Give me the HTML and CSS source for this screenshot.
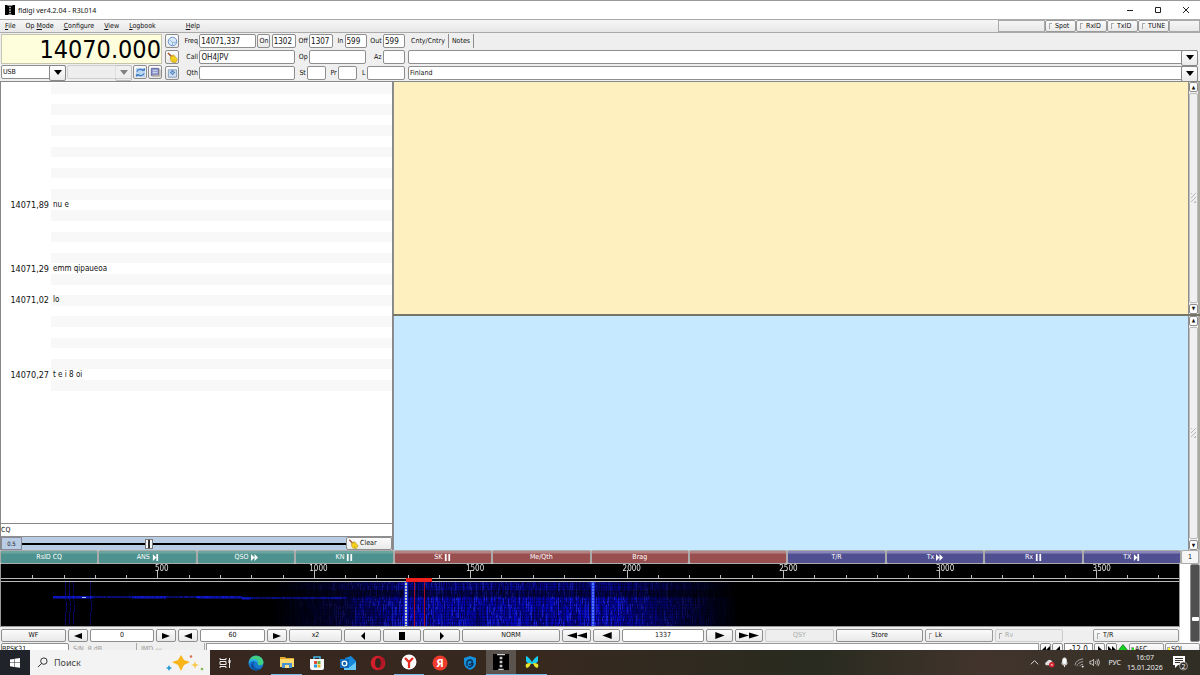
FILE: index.html
```html
<!DOCTYPE html>
<html lang="en">
<head>
    <meta charset="UTF-8">
    <meta name="viewport" content="width=device-width, initial-scale=1.0">
    <title>fldigi ver4.2.04 - R3L014</title>
    <link rel="stylesheet" href="styles.css">
</head>
<body>

<svg class="defs" aria-hidden="true">
    <symbol id="left" viewBox="0 0 8 6"><path d="M0 3 8 0v6z"/></symbol>
    <symbol id="right" viewBox="0 0 8 6"><path d="M8 3 0 0v6z"/></symbol>
    <symbol id="left2" viewBox="0 0 20 6"><path d="M0 3 10 0v6zM10 3 20 0v6z"/></symbol>
    <symbol id="right2" viewBox="0 0 20 6"><path d="M20 3 10 0v6zM10 3 0 0v6z"/></symbol>
    <symbol id="small-left" viewBox="0 0 8 8"><path d="M2 4 6 0v8z"/></symbol>
    <symbol id="small-right" viewBox="0 0 8 8"><path d="M6 4 2 0v8z"/></symbol>
    <symbol id="stop" viewBox="0 0 8 8"><path d="M1 0h6v8H1z"/></symbol>
    <symbol id="next" viewBox="0 0 8 8"><path d="M1 0l4 4-4 4zM5 0h2v8H5z"/></symbol>
    <symbol id="fast" viewBox="0 0 8 8"><path d="M0 0l4 4-4 4zM4 0l4 4-4 4z"/></symbol>
    <symbol id="back" viewBox="0 0 8 8"><path d="M4 0v8L0 4zM8 0v8L4 4z"/></symbol>
    <symbol id="pause" viewBox="0 0 8 8"><path d="M1 0h2v8H1zM5 0h2v8H5z"/></symbol>
    <symbol id="fldigi" viewBox="0 0 12 12"><path fill="#000" d="M0 0h12v12H0z"/><path fill="#ccc" d="M3 0h6v1H3zM5 2h2v2H5zM5 5h2v2H5zM5 8h2v2H5zM4 11h4v1H4z"/></symbol>
    <symbol id="broom" viewBox="0 0 12 12"><path stroke="#a0522d" stroke-width="1.6" d="M1 1l4 4"/><path fill="#f8d21c" stroke="#a8851a" stroke-width=".6" d="M3.500 5.500L7 3l4.500 5-2 3.500-4-.5-1.500-2z"/><path stroke="#b48e1c" stroke-width=".5" d="M4 6l4-2M7 8l1 3"/></symbol>
    <symbol id="globe" viewBox="0 0 12 12"><circle cx="6" cy="6" r="4.6" fill="#dcebfa" stroke="#5b8fca"/><path fill="none" stroke="#86aedb" d="M3 4l3 3h4M6 7v3"/></symbol>
    <symbol id="sync" viewBox="0 0 12 12"><path fill="#bcd6f2" d="M1 1h10v10H1z"/><path fill="none" stroke="#3d79c2" stroke-width="1.4" d="M2 5c1-3 6-3 7-1M10 7c-1 3-6 3-7 1"/><path fill="#3d79c2" d="M7 4h4V1zM5 8H1v3z"/></symbol>
    <symbol id="book" viewBox="0 0 12 12"><path fill="#8f9ad0" stroke="#5c669c" d="M1.500 1.500h8v8h-8z"/><path fill="#fff" stroke="#8c7a68" stroke-width=".6" d="M3 10h8V3h-1v6H3z"/><path stroke="#d4d9ef" d="M3 4h5M3 6h5"/></symbol>
    <symbol id="save" viewBox="0 0 12 12"><path fill="#cfe0f3" stroke="#8097b3" d="M1.500 2h9v8h-9z"/><path fill="#4f83bd" d="M6 2l3 3-3 3-3-3z"/><path fill="#a9c6e6" d="M5 4h2v2H5z"/></symbol>
</svg>

<header class="titlebar">
    <svg class="logo"><use href="#fldigi"/></svg>
    <span class="caption">fldigi ver4.2.04 - R3L014</span>
    <button class="win" aria-label="Minimize"><svg viewBox="0 0 8 8"><path d="M1 4.500h6"/></svg></button>
    <button class="win" aria-label="Maximize"><svg viewBox="0 0 8 8"><path d="M1.500 1.500h5v5h-5z"/></svg></button>
    <button class="win" aria-label="Close"><svg viewBox="0 0 8 8"><path d="M1 1l6 6M7 1l-6 6"/></svg></button>
</header>

<nav class="menubar">
    <button><u>F</u>ile</button>
    <button>Op <u>M</u>ode</button>
    <button><u>C</u>onfigure</button>
    <button><u>V</u>iew</button>
    <button><u>L</u>ogbook</button>
    <button class="help"><u>H</u>elp</button>
    <span class="blank wide"></span>
    <label class="light"><input type="checkbox">Spot</label>
    <label class="light"><input type="checkbox">RxID</label>
    <label class="light"><input type="checkbox">TxID</label>
    <label class="light"><input type="checkbox">TUNE</label>
    <span class="blank"></span>
</nav>

<section class="rig">
    <div class="tuner">
        <output class="dial">14070.000</output>
        <div class="modes">
            <span class="combo"><select aria-label="Mode"><option>USB</option></select></span>
            <span class="combo off"><select aria-label="Bandwidth" disabled><option></option></select></span>
            <button class="tool" aria-label="Sync"><svg><use href="#sync"/></svg></button>
            <button class="tool" aria-label="Logbook"><svg><use href="#book"/></svg></button>
        </div>
    </div>
    <div class="tools">
        <button class="tool" aria-label="Lookup"><svg><use href="#globe"/></svg></button>
        <button class="tool" aria-label="Clear fields"><svg><use href="#broom"/></svg></button>
        <button class="tool" aria-label="Save contact"><svg><use href="#save"/></svg></button>
    </div>
    <div class="log">
        <div class="row">
            <label class="first" for="freq">Freq</label><input class="w-freq" id="freq" value="14071,337">
            <button class="on">On</button><input class="w-time" aria-label="Time on" value="1302">
            <label class="mid" for="toff">Off</label><input class="w-time" id="toff" value="1307">
            <label class="in" for="rin">In</label><input class="w-rst" id="rin" value="599">
            <label class="out" for="rout">Out</label><input class="w-rst" id="rout" value="599">
        </div>
        <div class="row">
            <label class="first" for="call">Call</label><input class="w-call" id="call" value="OH4JPV">
            <label class="mid" for="op">Op</label><input class="w-op" id="op">
            <label class="out" for="az">Az</label><input class="w-rst" id="az">
        </div>
        <div class="row">
            <label class="first" for="qth">Qth</label><input class="w-call" id="qth">
            <label class="st" for="st">St</label><input class="w-st" id="st">
            <label class="st" for="pr">Pr</label><input class="w-st" id="pr">
            <label class="loc" for="loc">L</label><input class="w-loc" id="loc">
        </div>
    </div>
    <div class="country">
        <div class="tabs"><button class="active">Cnty/Cntry</button><button>Notes</button></div>
        <span class="combo"><select aria-label="County"><option></option></select></span>
        <span class="combo"><select aria-label="Country"><option>Finland</option></select></span>
    </div>
</section>

<main>
    <section class="browser">
        <div class="signals"><table><tbody id="signals"></tbody></table></div>
        <input class="seek" aria-label="Seek" value="CQ">
        <div class="squelch">
            <output>0.5</output>
            <input type="range" aria-label="Squelch" min="0" max="100" value="39">
            <button><svg><use href="#broom"/></svg>Clear</button>
        </div>
    </section>
    <section class="texts">
        <div class="pane rx">
            <textarea aria-label="Received text"></textarea>
            <div class="scroll"><button aria-label="Up">&#9650;</button><i></i><button aria-label="Down">&#9660;</button></div>
        </div>
        <div class="pane tx">
            <textarea aria-label="Transmit text"></textarea>
            <div class="scroll"><button aria-label="Up">&#9650;</button><i></i><button aria-label="Down">&#9660;</button></div>
        </div>
    </section>
</main>

<section class="macros">
    <button class="green">RsID CQ</button>
    <button class="green">ANS <svg><use href="#next"/></svg></button>
    <button class="green">QSO <svg><use href="#fast"/></svg></button>
    <button class="green">KN <svg><use href="#pause"/></svg></button>
    <button class="red">SK <svg><use href="#pause"/></svg></button>
    <button class="red">Me/Qth</button>
    <button class="red">Brag</button>
    <button class="red" aria-label="Empty macro"></button>
    <button class="blue">T/R</button>
    <button class="blue">Tx <svg><use href="#fast"/></svg></button>
    <button class="blue">Rx <svg><use href="#pause"/></svg></button>
    <button class="blue">TX <svg><use href="#next"/></svg></button>
    <button class="page">1</button>
</section>

<section class="waterfall">
    <div class="left">
        <div class="display">
            <canvas id="fall" width="1178" height="62"></canvas>
            <div class="scale"><span>500</span><span>1000</span><span>1500</span><span>2000</span><span>2500</span><span>3000</span><span>3500</span></div>
        </div>
        <div class="controls">
            <button>WF</button>
            <button aria-label="Lower level"><svg><use href="#left"/></svg></button>
            <input aria-label="Level" value="0">
            <button aria-label="Raise level"><svg><use href="#right"/></svg></button>
            <button aria-label="Lower range"><svg><use href="#left"/></svg></button>
            <input aria-label="Range" value="60">
            <button aria-label="Raise range"><svg><use href="#right"/></svg></button>
            <button>x2</button>
            <button aria-label="Scroll left"><svg><use href="#small-left"/></svg></button>
            <button aria-label="Center"><svg><use href="#stop"/></svg></button>
            <button aria-label="Scroll right"><svg><use href="#small-right"/></svg></button>
            <button>NORM</button>
            <button aria-label="Fast down"><svg class="double"><use href="#left2"/></svg></button>
            <button aria-label="Down"><svg class="big"><use href="#left"/></svg></button>
            <input aria-label="Carrier" value="1337">
            <button aria-label="Up"><svg class="big"><use href="#right"/></svg></button>
            <button aria-label="Fast up"><svg class="double"><use href="#right2"/></svg></button>
            <button disabled>QSY</button>
            <button>Store</button>
            <label class="light"><input type="checkbox">Lk</label>
            <label class="light dim"><input type="checkbox" disabled>Rv</label>
            <span></span>
            <label class="light"><input type="checkbox">T/R</label>
        </div>
    </div>
    <div class="power"><input type="range" aria-label="Transmit level" min="0" max="100" value="28"></div>
</section>

<footer class="status">
    <button class="mode">BPSK31</button>
    <span class="info">S/N &nbsp;8 dB</span>
    <span class="info">IMD ---</span>
    <span class="message"></span>
    <button aria-label="Much less"><svg><use href="#back"/></svg></button>
    <button aria-label="Less"><svg><use href="#small-left"/></svg></button>
    <output>-12.0</output>
    <button aria-label="More"><svg><use href="#small-right"/></svg></button>
    <button aria-label="Much more"><svg><use href="#fast"/></svg></button>
    <svg class="diamond" viewBox="0 0 8 8"><path fill="#12d21e" stroke="#075c0c" stroke-width=".5" d="M4 0l4 5-4 3-4-3z"/></svg>
    <label class="light afc"><input type="checkbox" checked>AFC</label>
    <label class="light sql"><input type="checkbox" checked>SQL</label>
</footer>

<div class="taskbar">
    <button class="start" aria-label="Start"><svg viewBox="0 0 12 12"><path fill="#fff" d="M1 2.500l4-.6v3.700H1zM5.500 1.800L11 1v4.600H5.500zM1 6.100h4v3.800l-4-.6zM5.500 6.100H11v4.700L5.500 10z"/></svg></button>
    <label class="search">
        <svg class="lens" viewBox="0 0 12 12"><circle cx="7.500" cy="4.500" r="3.500"/><path d="M5 7l-4 4"/></svg>
        <input type="text" placeholder="Поиск">
        <svg class="sparkle" viewBox="0 0 38 18"><path fill="#f9b61a" d="M15 1l3 5 6 2-6 3-3 6-3-6-6-3 6-2z"/><path fill="#f7c84a" d="M29 7l1 3 3 1-3 1-1 3-1-3-3-1 3-1z"/><path fill="#249bd3" d="M3 11l1 2 2 1-2 1-1 2-1-2-2-1 2-1z"/><circle cx="25" cy="2.500" r="1.300" fill="#d9744b"/><circle cx="36" cy="15" r="1.300" fill="#83b84c"/></svg>
    </label>
    <div class="apps">
        <button aria-label="Task view"><svg viewBox="0 0 16 16"><path fill="none" stroke="#eee" d="M3 3v1.500h6V3M3 6.500h6v3H3zM3 13v-1.500h6V13M12.500 3v10"/><path fill="#eee" d="M11.500 5h2v3h-2z"/></svg></button>
        <button aria-label="Edge"><svg viewBox="0 0 16 16"><circle cx="8" cy="8" r="7.500" fill="#1679cf"/><path fill="#43cf82" d="M1 6C3-1 14-1 15.500 7c0 4-5 4-6 2 2-4-4-7-8.500-3z"/><path fill="#28b7e7" d="M1 6c5-4 10-1 8.500 2C6 4 2 6 .6 9z"/><path fill="#0c519f" d="M6 7c-2 4 2 8 7 6-4 5-11 1-10-3 .5-2 2-3 3-3z"/></svg></button>
        <button class="open" aria-label="Explorer"><svg viewBox="0 0 16 16"><path fill="#e5a82e" d="M1 3h5l1 1h8v9H1z"/><path fill="#ffdb6e" d="M1 5h14v8H1z"/><path fill="#4c93d2" d="M3 9h10v5H3z"/><path fill="#ffe48d" d="M6 11h4v3H6z"/></svg></button>
        <button aria-label="Store"><svg viewBox="0 0 16 16"><path fill="none" stroke="#48b5e8" stroke-width="1.500" d="M5 5V2h6v3"/><path fill="#f5f7f8" d="M1 4h14v9q0 2-2 2H3q-2 0-2-2z"/><path fill="#e74c35" d="M5 6h3v3H5z"/><path fill="#70b13c" d="M8.500 6h3v3h-3z"/><path fill="#259de0" d="M5 9.500h3v3H5z"/><path fill="#f0b320" d="M8.500 9.500h3v3h-3z"/></svg></button>
        <button aria-label="Outlook"><svg viewBox="0 0 16 16"><path fill="#1687d9" d="M5 3l6-2 5 5v9H4z"/><path fill="#65c8f6" d="M4 9l6 3 6-5v8H4z"/><path fill="#1168b8" d="M0 4h9v9H0z"/><circle cx="4.500" cy="8.500" r="2.300" fill="none" stroke="#fff" stroke-width="1.300"/></svg></button>
        <button aria-label="Opera"><svg viewBox="0 0 16 16"><circle cx="8" cy="8" r="7.300" fill="#d31e2b"/><ellipse cx="8" cy="8" rx="3" ry="5" fill="#35251f"/><path fill="#8f1220" d="M9 1q9 2 4 11-2 3-5 2 5-4 1-13z" opacity=".5"/></svg></button>
        <button class="open" aria-label="Yandex Browser"><svg viewBox="0 0 16 16"><circle cx="8" cy="8" r="7.500" fill="#fff"/><path fill="none" stroke="#e62b23" stroke-width="2.300" d="M4 4l4 4 4-4M8 8v6"/></svg></button>
        <button aria-label="Yandex"><svg viewBox="0 0 16 16"><circle cx="8" cy="8" r="7.500" fill="#ef3b2d"/><text x="8" y="12" text-anchor="middle" fill="#fff">Я</text></svg></button>
        <button aria-label="Security"><svg viewBox="0 0 16 16"><path fill="#1590dc" d="M8 1l6 2v5q0 5-6 7-6-2-6-7V3z"/><path fill="none" stroke="#0b2d50" stroke-width="1.500" d="M5 11q-1-6 3-6 3 0 2 3-1 2-3 1M6 12q5 0 5-4"/></svg></button>
        <button class="open active" aria-label="fldigi"><svg><use href="#fldigi"/></svg></button>
        <button class="open" aria-label="Butterfly"><svg viewBox="0 0 16 16"><path fill="#19cbed" d="M2 2q3 1 6 6v2q-5 0-6-3zM14 2q-3 1-6 6v2q5 0 6-3z"/><path fill="#e9e52d" d="M7 9q-3 0-5 1-1 3 1 4 3-1 4-5zM9 9q3 0 5 1 1 3-1 4-3-1-4-5z"/></svg></button>
    </div>
    <div class="tray">
        <svg viewBox="0 0 12 12"><path d="M2 8l4-4 4 4"/></svg>
        <svg viewBox="0 0 12 12"><path fill="#ddd" stroke="none" d="M2 9Q0 7 3 5q3-4 6 0l1 4z"/><circle cx="8.500" cy="8.500" r="3" fill="#d5202b" stroke="none"/><path stroke-width=".8" d="M7.500 7.500l2 2m0-2l-2 2"/></svg>
        <svg viewBox="0 0 12 12"><rect x="4" y="1" width="4" height="7" rx="2" fill="#fff"/><path d="M3 6q0 3 3 3t3-3M6 9v2"/></svg>
        <svg viewBox="0 0 12 12"><path stroke="#aaa" d="M1 9Q2 3 10 2M3 10q1-4 7-5M6 10q1-2 4-2"/><path fill="#fff" d="M9 10h1v1H9z"/></svg>
        <svg viewBox="0 0 12 12"><path stroke-width=".8" d="M1 4.500h2l2-2v7l-2-2H1zM7 4.500q1 1.500 0 3M8.500 3q2 3 0 6M10 2q3 4 0 8"/></svg>
        <span class="lang">РУС</span>
        <time>16:07<br>15.01.2026</time>
        <svg class="note" viewBox="0 0 16 16"><path fill="#fff" stroke="none" d="M1 1h12v9H6l-3 3v-3H1z"/><path stroke="#39302b" d="M3 3.500h8M3 5.500h8M3 7.500h5"/><circle cx="11.500" cy="11" r="4" fill="#39302b" stroke="#bbb" stroke-width=".7"/><text x="11.500" y="13.500" text-anchor="middle">2</text></svg>
    </div>
</div>

<script src="script.js"></script>
</body>
</html>
```
FILE: styles.css
```css
* {
    margin: 0;
    padding: 0;
    box-sizing: border-box;
}

body {
    height: 100vh;
    display: flex;
    flex-direction: column;
    overflow: hidden;
    background: #efefef;
    color: #111;
    font: 7px/9px "DejaVu Sans Condensed", "DejaVu Sans", sans-serif;
}

button, input, select, textarea {
    font: inherit;
    color: inherit;
    min-width: 0;
    border: 1px solid #8e8e8e;
    border-radius: 2px;
    outline: none;
}

button {
    display: flex;
    align-items: center;
    justify-content: center;
    background: linear-gradient(#fbfbfb, #e9e9e9);
    white-space: nowrap;
}

input, select {
    background: #fff;
    padding: 0 1px;
    font-size: 8px;
}

svg {
    flex: none;
    width: 8px;
    height: 8px;
}

.defs {
    display: none;
}

/* title and menu */
.titlebar {
    flex: none;
    display: flex;
    align-items: center;
    height: 19px;
    padding-left: 5px;
    background: #fff;
    border-top: 1px solid #999;
    font-family: "Noto Sans", sans-serif;
}

.logo {
    width: 10px;
    height: 10px;
    margin-right: 3px;
}

.caption {
    flex: 1;
}

.win {
    width: 28px;
    height: 18px;
    border: none;
    background: none;
}

.win svg {
    fill: none;
    stroke: #222;
    stroke-width: 1;
}

.menubar {
    flex: none;
    display: flex;
    height: 14px;
    border-top: 1px solid #aaa;
    border-bottom: 1px solid #aaa;
    background: linear-gradient(#f6f6f6, #e7e7e7);
}

.menubar button {
    display: block;
    border: none;
    background: none;
    padding: 0 5px;
}

.menubar .help {
    margin: 0 auto 0 20px;
}

.light {
    display: flex;
    align-items: center;
    gap: 3px;
    padding-left: 3px;
    border: 1px solid #999;
    border-radius: 2px;
    background: linear-gradient(#fbfbfb, #e9e9e9);
}

.light input {
    appearance: none;
    width: 3px;
    height: 6px;
    border: none;
    border-left: 1px solid #aaa;
    border-top: 1px solid #aaa;
    border-radius: 0;
    background: none;
}

.menubar .light {
    width: 31px;
}

.blank {
    width: 31px;
    border: 1px solid #aaa;
}

.blank.wide {
    width: 47px;
}

/* rig and log fields */
.rig {
    flex: none;
    display: flex;
    gap: 3px;
    height: 49px;
    padding: 1px 2px 1px 1px;
    border-bottom: 1px solid #888;
}

.tuner {
    width: 161px;
    display: flex;
    flex-direction: column;
    gap: 1px;
}

.dial {
    height: 30px;
    background: #fffedc;
    border: 1px solid #c6c5b0;
    text-align: right;
    font-size: 25px;
    line-height: 29px;
    color: #000;
}

.modes {
    display: flex;
    gap: 1px;
}

.combo {
    display: flex;
    position: relative;
    width: 65px;
    height: 14px;
}

.combo select {
    flex: 1;
    appearance: none;
}

.modes select {
    font-size: 7px;
}

.combo::after {
    content: "";
    position: absolute;
    right: 4px;
    top: 5px;
    border: 4px solid transparent;
    border-top: 5px solid #000;
    border-bottom: none;
    pointer-events: none;
}

.combo::before {
    content: "";
    position: absolute;
    right: 0;
    width: 15px;
    height: 100%;
    border: 1px solid #888;
    border-radius: 2px;
    background: linear-gradient(#fff, #eaeaea);
    pointer-events: none;
}

.combo.off {
    opacity: .45;
}

.off select {
    background: #eee;
}

.tool {
    flex: 1;
    height: 14px;
}

.tool svg {
    width: 11px;
    height: 11px;
}

.tools {
    width: 14px;
    display: flex;
    flex-direction: column;
    gap: 2px;
}

.tools .tool {
    flex: none;
}

.log {
    width: 223px;
    display: flex;
    flex-direction: column;
    gap: 2px;
}

.row {
    display: flex;
    align-items: center;
    justify-content: space-between;
    height: 14px;
}

.row input, .on {
    height: 14px;
}

.row label {
    text-align: right;
}

.first { width: 16px; }
.mid { width: 11px; }
.in { width: 9px; }
.out { width: 14px; }
.st { width: 9px; }
.loc { width: 7px; }
.on { width: 13px; }
.w-freq { width: 57px; }
.w-time { width: 24px; }
.w-rst { width: 22px; }
.w-call { width: 96px; }
.w-op { width: 57px; }
.w-st { width: 19px; }
.w-loc { width: 38px; }

.country {
    flex: 1;
    display: flex;
    flex-direction: column;
    gap: 2px;
}

.country .combo {
    width: 100%;
}

.country select {
    font-size: 7px;
}

.tabs {
    display: flex;
    height: 14px;
}

.tabs button {
    padding: 0 3px;
    background: none;
    border-width: 0 1px 0 0;
    border-radius: 0;
}

/* signal browser and text panes */
main {
    flex: 1;
    min-height: 0;
    display: flex;
}

.browser {
    width: 33%;
    max-width: 393px;
    display: flex;
    flex-direction: column;
    border-left: 1px solid #888;
    border-right: 1px solid #888;
}

.signals {
    flex: 1;
    min-height: 0;
    padding-top: 1px;
    overflow: hidden;
    background: #fff;
    border-bottom: 1px solid #888;
}

.signals table {
    width: 100%;
    height: 308px;
    border-collapse: collapse;
    table-layout: fixed;
    font-size: 8px;
    line-height: 10px;
    white-space: pre;
}

.signals tr {
    height: 10px;
}

.signals th {
    width: 50px;
    padding-right: 2px;
    font-weight: normal;
    font-size: 9px;
    text-align: right;
}

.signals td {
    padding-left: 2px;
}

.signals tr:nth-child(odd) td {
    background: #f8f8f8;
}

.seek {
    height: 13px;
    padding: 0;
    border-width: 0 0 1px;
    border-radius: 0;
    font-size: 7px;
}

.squelch {
    display: flex;
    height: 13px;
    background: #b8cce4;
}

.squelch output {
    width: 21px;
    border: 1px solid #889;
    text-align: center;
    line-height: 12px;
    font-size: 6px;
}

.squelch input {
    flex: 1;
    appearance: none;
    padding: 0;
    border: none;
    background: linear-gradient(#000, #000) center / 100% 2px no-repeat #b8cce4;
}

.squelch input::-webkit-slider-thumb {
    appearance: none;
    width: 8px;
    height: 10px;
    border: 1px solid #777;
    background: linear-gradient(#333, #333) center / 2px 8px no-repeat #f4f4f4;
}

.squelch button {
    width: 46px;
    justify-content: flex-start;
    gap: 1px;
    padding-left: 1px;
}

.squelch svg {
    width: 11px;
    height: 10px;
}

.texts {
    flex: 1;
    display: flex;
    flex-direction: column;
}

.pane {
    flex: 1;
    display: flex;
    padding-right: 2px;
    background: #aaa9a0;
}

.pane textarea {
    flex: 1;
    resize: none;
    border-width: 0 1px 0 1px;
    border-radius: 0;
}

.rx {
    flex-grow: 99;
    border-bottom: 2px solid #777566;
}

.tx {
    flex-grow: 100;
}

.rx textarea {
    background: #fff0bf;
}

.tx textarea {
    background: #c6e9ff;
}

.scroll {
    width: 9px;
    display: flex;
    flex-direction: column;
    background: #f0f0f0;
}

.scroll button {
    height: 10px;
    font-size: 5px;
    background: #fff;
}

.scroll i {
    flex: 1;
    margin: 1px 0;
    border: 1px solid #bbb;
    border-radius: 2px;
    background: repeating-linear-gradient(135deg, #bbb 0 1px, #eee 1px 3px) center / 5px 10px no-repeat;
}

/* macro keys */
.macros {
    flex: none;
    display: flex;
    height: 14px;
    padding-right: 1px;
    background: #c8c8c8;
}

.macros button {
    flex: 1;
    gap: 2px;
    color: #fff;
    border-color: #aaa;
}

.macros svg {
    width: 7px;
    height: 7px;
    fill: #fff;
}

.macros .green { background: linear-gradient(#6ba59f 0 2px, #4d928e 3px); }
.macros .red { background: linear-gradient(#b58282 0 2px, #994f50 3px); }
.macros .blue { background: linear-gradient(#8786b7 0 2px, #504f92 3px); }

.macros .page {
    flex: none;
    width: 18px;
    color: #111;
    background: #f5f5f5;
}

/* waterfall */
.waterfall {
    flex: none;
    display: flex;
}

.left {
    flex: 1;
    min-width: 0;
}

.display {
    position: relative;
    border: 1px solid #999;
    border-top: none;
}

.display canvas {
    display: block;
    width: 100%;
    height: 62px;
}

.scale {
    position: absolute;
    inset: 0;
    display: flex;
    padding-left: 7%;
    color: #e6e6e6;
    font-size: 8px;
    line-height: 10px;
}

.scale span {
    flex: none;
    width: 14.3%;
    text-align: center;
}

.controls {
    display: grid;
    grid-template-columns: 65fr 20fr 64fr 20fr 20fr 65fr 20fr 53fr 37fr 38fr 37fr 98fr 29fr 27fr 82fr 27fr 28fr 69fr 87fr 68fr 68fr 26fr 86fr;
    gap: 2px;
    height: 16px;
    padding: 2px 1px 1px;
}

.controls > input {
    width: 100%;
    text-align: center;
    font-size: 7px;
}

.controls .big {
    width: 10px;
    height: 7px;
}

.controls .double {
    width: 20px;
    height: 7px;
}

.controls button:disabled, .dim {
    color: #aaa;
    border-color: #ccc;
    background: #eee;
}

.power {
    width: 20px;
    display: flex;
    justify-content: flex-end;
    background: #fff;
}

.power input {
    writing-mode: vertical-lr;
    direction: rtl;
    appearance: none;
    width: 10px;
    height: 78px;
    background: #505050;
}

.power input::-webkit-slider-thumb {
    appearance: none;
    width: 7px;
    height: 4px;
    border-radius: 1px;
    background: #fff;
}

/* status line, cut off by the taskbar */
.status {
    flex: none;
    display: flex;
    height: 7px;
    overflow: hidden;
    gap: 1px;
    padding-left: 1px;
}

.status > * {
    flex: none;
    height: 13px;
}

.status .mode {
    width: 68px;
    justify-content: flex-start;
    background: #fff;
}

.status .info {
    width: 67px;
    padding: 2px 3px;
    border-right: 1px solid #aaa;
    color: #999;
}

.status .message {
    flex: 1;
    border: 1px solid #999;
    background: #fff;
}

.status button {
    width: 11px;
}

.status output {
    width: 29px;
    border: 1px solid #888;
    background: #fff;
    text-align: center;
    font-size: 8px;
    line-height: 12px;
}

.diamond {
    width: 10px;
}

.status .light {
    width: 35px;
    gap: 1px;
    padding-left: 1px;
}

.status .afc input { background: #1ee11e; }
.status .sql input { background: #f5ed19; }

/* taskbar */
.taskbar {
    flex: none;
    display: flex;
    height: 25px;
    background: linear-gradient(90deg, #35251f, #38291f 45%, #292b20 68%, #42342c 82%, #302e24);
    color: #eee;
    font-family: "Noto Sans", sans-serif;
}

.taskbar button {
    border: none;
    border-radius: 0;
    background: none;
}

.taskbar .start {
    width: 30px;
    background: #20242a;
}

.start svg {
    width: 12px;
    height: 12px;
}

.search {
    width: 180px;
    display: flex;
    align-items: center;
    padding: 0 6px 0 7px;
    background: #f3f3f3;
}

.search input {
    flex: 1;
    padding-left: 6px;
    border: none;
    background: none;
    color: #333;
    font-size: 9px;
}

.search input::placeholder {
    color: #444;
}

.lens {
    width: 11px;
    height: 11px;
    fill: none;
    stroke: #222;
}

.sparkle {
    width: 38px;
    height: 18px;
}

.apps {
    width: 337px;
    display: grid;
    grid-template-columns: repeat(11, 1fr);
}

.apps svg {
    width: 16px;
    height: 16px;
}

.apps text {
    font-size: 11px;
    font-weight: bold;
}

.taskbar .open {
    border-bottom: 1px solid #76b9ed;
}

.taskbar .active {
    background: #5b534e;
}

.tray {
    display: flex;
    align-items: center;
    gap: 4px;
    margin-left: auto;
    padding-right: 12px;
}

.tray svg {
    width: 11px;
    height: 11px;
    fill: none;
    stroke: #eee;
}

.lang {
    margin-left: 4px;
}

.tray time {
    width: 40px;
    line-height: 10px;
    text-align: center;
}

.tray .note {
    width: 16px;
    height: 16px;
    margin-left: 3px;
}

.note text {
    fill: #fff;
    stroke: none;
    font-size: 7px;
}
```
FILE: script.js
```javascript
const heard = {
    11: ["14071,89", "nu e"],
    17: ["14071,29", "emm qipaueoa"],
    20: ["14071,02", "lo"],
    27: ["14070,27", "t e i 8 oi"]
};

const body = document.getElementById("signals");
for (let i = 0; i < 29; i++) {
    const row = body.insertRow();
    const [freq, text] = heard[i] || ["", ""];
    const head = document.createElement("th");
    head.textContent = freq;
    row.append(head);
    row.insertCell().textContent = text;
}

const canvas = document.getElementById("fall");
const ctx = canvas.getContext("2d");
const hz = 0.3128;

// fixed seed, so the noise does not change on reload
let seed = 7;
function rnd() {
    seed = (seed * 16807) % 2147483647;
    return seed / 2147483647;
}

ctx.fillStyle = "#000";
ctx.fillRect(0, 0, canvas.width, canvas.height);

// frequency scale
ctx.fillStyle = "#bbb";
ctx.fillRect(0, 14, canvas.width, 1);
ctx.fillRect(0, 17, canvas.width, 1);
for (let f = 100; f < 3766; f += 100) {
    const tall = f % 500 === 0;
    ctx.fillRect(Math.round(f * hz), tall ? 6 : 11, 1, tall ? 8 : 3);
}

// band noise
function level(x) {
    if (x < 270) return 0;
    if (x < 400) return (x - 270) / 140;
    if (x < 620) return 1;
    return Math.max(0, 0.9 - (x - 620) / 130);
}

for (let x = 0; x < 780; x++) {
    let v = rnd();
    for (let y = 18; y < 62; y++) {
        if (rnd() < 0.2) v = rnd();
        let a = level(x) * (0.4 + v * 0.6);
        if (y > 25 && y < 33) a *= x < 430 ? 0.45 : 0.5;
        if (y < 26) a *= 0.75;
        if (x < 350 && y > 33) a *= 0.7;
        if (y % 3 === 0 || x % 4 === 0) a *= 0.75;
        ctx.fillStyle = `rgba(${v > 0.85 ? 25 : 5}, ${v > 0.85 ? 35 : 8}, 225, ${a})`;
        ctx.fillRect(x, y, 1, 1);
    }
}

// weak carrier drifting along one line
for (let x = 52; x < 345; x++) {
    const strong = x < 92 || (x > 130 && x < 165) || (x > 195 && x < 250);
    const y = 32 + (x > 240 ? 1 : 0);
    ctx.fillStyle = `rgba(15, 25, 225, ${strong ? 0.6 + rnd() * 0.4 : 0.3 + rnd() * 0.4})`;
    ctx.fillRect(x, y, 1, 2);
    if (strong) {
        ctx.fillStyle = "rgba(15, 20, 200, .5)";
        ctx.fillRect(x, y + 2, 1, 1);
    }
}
ctx.fillStyle = "#aac0ff";
ctx.fillRect(81, 33, 4, 1);

for (const x of [64, 68, 72, 89]) {
    for (let y = 18; y < 61; y++) {
        ctx.fillStyle = `rgba(12, 15, 200, ${0.25 + rnd() * 0.45})`;
        ctx.fillRect(x + (y > 36 && y < 48 ? 1 : 0), y, 1, 1);
    }
}

for (let y = 18; y < 62; y++) {
    ctx.fillStyle = "rgba(30, 50, 240, .75)";
    ctx.fillRect(403, y, 4, 1);
    ctx.fillRect(590, y, 4, 1);
    ctx.fillStyle = y % 3 ? "#c9cdb8" : "#394bd2";
    ctx.fillRect(404, y, 2, 1);
    ctx.fillStyle = y % 3 ? "#4e72ff" : "#2943df";
    ctx.fillRect(591, y, 2, 1);
}

// receive cursor
ctx.fillStyle = "#f0201c";
ctx.fillRect(405, 14, 26, 4);
ctx.fillStyle = "#a50c28";
ctx.fillRect(413, 18, 1, 44);
ctx.fillRect(423, 18, 1, 44);
```
